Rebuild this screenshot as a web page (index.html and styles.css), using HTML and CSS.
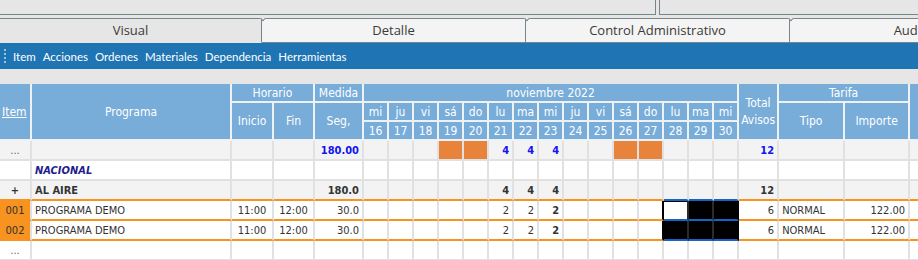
FILE: index.html
```html
<!DOCTYPE html>
<html lang="es">
<head>
<meta charset="utf-8">
<title>Visual</title>
<link rel="stylesheet" href="styles.css">
</head>
<body>
<div class="topbar"><div class="pane pane-left"></div><div class="pane pane-right"></div></div>
<div class="tabstrip">
  <div class="tab tab-active">Visual</div>
  <div class="tab">Detalle</div>
  <div class="tab">Control Administrativo</div>
  <div class="tab tab-last">Auditoría</div>
</div>
<div class="toolbar">
  <span class="grip"></span>
  <span class="menu">Item</span>
  <span class="menu">Acciones</span>
  <span class="menu">Ordenes</span>
  <span class="menu">Materiales</span>
  <span class="menu">Dependencia</span>
  <span class="menu">Herramientas</span>
</div>
<div class="gridwrap">
<table class="grid">
  <colgroup>
    <col class="c-item"><col class="c-prog"><col class="c-ini"><col class="c-fin"><col class="c-med">
    <col class="c-day"><col class="c-day"><col class="c-day"><col class="c-day"><col class="c-day">
    <col class="c-day"><col class="c-day"><col class="c-day"><col class="c-day"><col class="c-day">
    <col class="c-day"><col class="c-day"><col class="c-day"><col class="c-day"><col class="c-day">
    <col class="c-tot"><col class="c-tipo"><col class="c-imp"><col class="c-extra">
  </colgroup>
  <thead>
    <tr>
      <th rowspan="3" class="h-item"><span class="link">Item</span></th>
      <th rowspan="3">Programa</th>
      <th colspan="2">Horario</th>
      <th>Medida</th>
      <th colspan="15">noviembre 2022</th>
      <th rowspan="3" class="h-tot">Total<br>Avisos</th>
      <th colspan="2">Tarifa</th>
      <th rowspan="3"></th>
    </tr>
    <tr>
      <th rowspan="2">Inicio</th>
      <th rowspan="2">Fin</th>
      <th rowspan="2">Seg,</th>
      <th>mi</th><th>ju</th><th>vi</th><th>sá</th><th>do</th><th>lu</th><th>ma</th><th>mi</th><th>ju</th><th>vi</th><th>sá</th><th>do</th><th>lu</th><th>ma</th><th>mi</th>
      <th rowspan="2">Tipo</th>
      <th rowspan="2">Importe</th>
    </tr>
    <tr>
      <th>16</th><th>17</th><th>18</th><th>19</th><th>20</th><th>21</th><th>22</th><th>23</th><th>24</th><th>25</th><th>26</th><th>27</th><th>28</th><th>29</th><th>30</th>
    </tr>
  </thead>
  <tbody>
    <tr class="row-gray">
      <td class="ctr dim">...</td><td></td><td></td><td></td><td class="num blue">180.00</td>
      <td></td><td></td><td></td><td class="wkend"></td><td class="wkend"></td>
      <td class="num blue">4</td><td class="num blue">4</td><td class="num blue">4</td><td></td><td></td>
      <td class="wkend"></td><td class="wkend"></td><td></td><td></td><td></td>
      <td class="num blue">12</td><td></td><td></td><td></td>
    </tr>
    <tr>
      <td></td><td class="nacional">NACIONAL</td><td></td><td></td><td></td>
      <td></td><td></td><td></td><td></td><td></td><td></td><td></td><td></td><td></td><td></td>
      <td></td><td></td><td></td><td></td><td></td>
      <td></td><td></td><td></td><td></td>
    </tr>
    <tr class="row-gray row-bold row-pre">
      <td class="ctr">+</td><td class="aire">AL AIRE</td><td></td><td></td><td class="num">180.0</td>
      <td></td><td></td><td></td><td></td><td></td>
      <td class="num">4</td><td class="num">4</td><td class="num">4</td><td></td><td></td>
      <td></td><td></td><td class="blk-top"></td><td class="blk-top"></td><td class="blk-top"></td>
      <td class="num">12</td><td></td><td></td><td></td>
    </tr>
    <tr class="row-sel">
      <td class="ctr code">001</td><td>PROGRAMA DEMO</td><td class="ctr">11:00</td><td class="ctr">12:00</td><td class="num">30.0</td>
      <td></td><td></td><td></td><td></td><td></td>
      <td class="num">2</td><td class="num">2</td><td class="num bold">2</td><td></td><td></td>
      <td></td><td class="blk-left"></td><td class="blk cur"></td><td class="blk"></td><td class="blk blk-end"></td>
      <td class="num">6</td><td>NORMAL</td><td class="num">122.00</td><td></td>
    </tr>
    <tr class="row-sel">
      <td class="ctr code">002</td><td>PROGRAMA DEMO</td><td class="ctr">11:00</td><td class="ctr">12:00</td><td class="num">30.0</td>
      <td></td><td></td><td></td><td></td><td></td>
      <td class="num">2</td><td class="num">2</td><td class="num bold">2</td><td></td><td></td>
      <td></td><td class="blk-left"></td><td class="blk"></td><td class="blk"></td><td class="blk blk-end"></td>
      <td class="num">6</td><td>NORMAL</td><td class="num">122.00</td><td></td>
    </tr>
    <tr>
      <td class="ctr dim">...</td><td></td><td></td><td></td><td></td>
      <td></td><td></td><td></td><td></td><td></td><td></td><td></td><td></td><td></td><td></td>
      <td></td><td></td><td></td><td></td><td></td>
      <td></td><td></td><td></td><td></td>
    </tr>
  </tbody>
</table>
</div>
</body>
</html>
```
FILE: styles.css
```css
html, body {
  margin: 0;
  padding: 0;
  background: #e6e6e6;
  overflow: hidden;
}
body {
  width: 918px;
  height: 260px;
  font-family: "Open Sans", "Noto Sans", sans-serif;
}

/* top panes */
.topbar {
  display: flex;
  gap: 3px;
  height: 15px;
}
.pane {
  box-sizing: border-box;
  height: 15px;
  border-bottom: 1px solid #76878c;
}
.pane-left {
  width: 656px;
  border-right: 1px solid #76878c;
}
.pane-right {
  flex: 1;
  border-left: 1px solid #76878c;
}

/* tabs */
.tabstrip {
  display: flex;
  margin-top: 3px;
  height: 25px;
  overflow: hidden;
}
.tab {
  position: relative;
  box-sizing: border-box;
  flex: 0 0 264px;
  height: 25px;
  border-top: 1px solid #76878c;
  border-right: 1px solid #76878c;
  border-bottom: 1px solid #76878c;
  background: #f4f4f4;
  color: #3a3a3a;
  font-size: 13px;
  line-height: 23px;
  text-align: center;
  white-space: nowrap;
}
.tab-active {
  flex-basis: 262px;
  background: #e6e6e6;
  border-bottom-color: #e6e6e6;
}
.tab::after {
  content: "";
  position: absolute;
  z-index: 1;
  top: -5px;
  right: -5px;
  width: 5px;
  height: 5px;
  background: #f4f4f4;
  border-right: 1px solid #76878c;
  border-bottom: 1px solid #76878c;
  transform: rotate(45deg);
}
.tab-last::after { display: none; }

/* toolbar */
.toolbar {
  display: flex;
  align-items: center;
  gap: 7px;
  height: 26px;
  background: #1f74b4;
  color: #fff;
  font-family: Lato, "Open Sans", sans-serif;
  font-size: 11.5px;
  padding-left: 4px;
}
.grip {
  width: 2px;
  height: 15px;
  background: repeating-linear-gradient(to bottom, #9cc2e4 0 2px, transparent 2px 4px);
}
.menu {
  white-space: nowrap;
}

/* grid */
.gridwrap {
  margin-top: 15px;
  width: 918px;
  overflow: hidden;
}
.grid {
  border-collapse: separate;
  border-spacing: 0;
  table-layout: fixed;
  width: 950px;
  font-family: "DejaVu Sans Condensed", "Liberation Sans Narrow", "DejaVu Sans", sans-serif;
  font-size: 11px;
  color: #333;
}
.c-item { width: 32px; }
.c-prog { width: 200px; }
.c-ini { width: 42px; }
.c-fin { width: 41px; }
.c-med { width: 49px; }
.c-day { width: 25px; }
.c-tot { width: 40px; }
.c-tipo { width: 66px; }
.c-imp { width: 65px; }
.c-extra { width: 40px; }

.grid th {
  box-sizing: border-box;
  height: 19px;
  padding: 0;
  background: #78acd9;
  color: #fff;
  font-weight: normal;
  font-size: 12px;
  text-align: center;
  border-right: 2px solid #eef2f5;
  border-bottom: 2px solid #eef2f5;
  white-space: nowrap;
  overflow: hidden;
}
.grid th.h-item {
  text-align: left;
  padding-left: 2px;
}
.link {
  text-decoration: underline;
}
.grid th.h-tot {
  line-height: 17px;
}
.grid td {
  box-sizing: border-box;
  height: 20px;
  padding: 0 3px;
  border-right: 2px solid #e1e1e1;
  border-bottom: 2px solid #e1e1e1;
  background: #fff;
  white-space: nowrap;
  overflow: hidden;
}
.row-gray td { background: #f3f3f3; }
.row-bold td { font-weight: bold; }
.row-pre td { border-bottom-color: #f7931e; }
.row-sel td { border-bottom-color: #f7931e; }
.ctr { text-align: center; }
.num { text-align: right; }
.bold { font-weight: bold; }
.dim { color: #666; }
.blue { color: #1414f0; font-weight: bold; }
.grid td.wkend { background: #e8833b; }
.nacional {
  color: #1e1e8c;
  font-style: italic;
  font-weight: bold;
}
.aire { padding-left: 5px; }
.grid td.code {
  background: #f7931e;
  color: #333;
}
.grid td.blk-top { border-bottom-color: #1565c8; }
.grid td.blk-left { border-right-color: #000; }
.grid td.blk {
  background: #000;
  border-right-color: #2b2b2b;
  border-bottom-color: #1565c8;
}
.grid td.blk-end { border-right-color: #000; }
.grid td.cur {
  background: #fff;
  box-shadow: inset 0 1px 0 #000;
}
```
